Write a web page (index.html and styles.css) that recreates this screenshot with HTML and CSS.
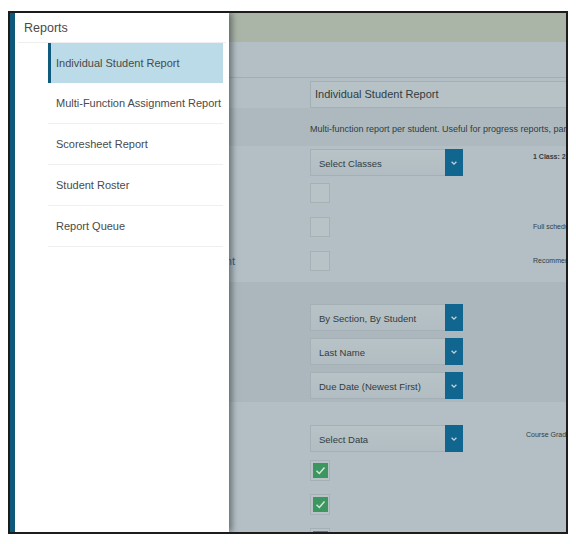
FILE: index.html
```html
<!DOCTYPE html>
<html>
<head>
<meta charset="utf-8">
<link rel="stylesheet" href="styles.css">
</head>
<body>
<div class="frame">
  <div class="strip"></div>
  <nav class="panel">
    <div class="panel-title">Reports</div>
    <ul class="menu">
      <li class="item active">Individual Student Report</li>
      <li class="item">Multi-Function Assignment Report</li>
      <li class="item">Scoresheet Report</li>
      <li class="item">Student Roster</li>
      <li class="item">Report Queue</li>
    </ul>
  </nav>
  <main class="backdrop">
    <div class="topband"></div>
    <div class="subhead"></div>
    <div class="report-row">
      <div class="input">Individual Student Report</div>
    </div>
    <div class="desc-row">
      <span class="desc">Multi-function report per student. Useful for progress reports, parent conferences and more.</span>
    </div>
    <section class="sec sec-a">
      <div class="row"><div class="lbl"></div><div class="select"><span>Select Classes</span><span class="btn"><svg viewBox="0 0 10 10" width="8" height="8"><path d="M2 3.5 L5 6.5 L8 3.5" fill="none" stroke="currentColor" stroke-width="1.6"/></svg></span></div><div class="note bold up">1 Class: 24 Students</div></div>
      <div class="row"><div class="lbl"></div><div class="cb"></div><div class="note"></div></div>
      <div class="row"><div class="lbl"></div><div class="cb"></div><div class="note">Full schedule for each student</div></div>
      <div class="row"><div class="lbl link">Show Assignment</div><div class="cb"></div><div class="note">Recommended for progress reports</div></div>
    </section>
    <section class="sec sec-b">
      <div class="row"><div class="lbl"></div><div class="select"><span>By Section, By Student</span><span class="btn"><svg viewBox="0 0 10 10" width="8" height="8"><path d="M2 3.5 L5 6.5 L8 3.5" fill="none" stroke="currentColor" stroke-width="1.6"/></svg></span></div><div class="note"></div></div>
      <div class="row"><div class="lbl"></div><div class="select"><span>Last Name</span><span class="btn"><svg viewBox="0 0 10 10" width="8" height="8"><path d="M2 3.5 L5 6.5 L8 3.5" fill="none" stroke="currentColor" stroke-width="1.6"/></svg></span></div><div class="note"></div></div>
      <div class="row"><div class="lbl"></div><div class="select"><span>Due Date (Newest First)</span><span class="btn"><svg viewBox="0 0 10 10" width="8" height="8"><path d="M2 3.5 L5 6.5 L8 3.5" fill="none" stroke="currentColor" stroke-width="1.6"/></svg></span></div><div class="note"></div></div>
    </section>
    <section class="sec sec-c">
      <div class="row"><div class="lbl"></div><div class="select"><span>Select Data</span><span class="btn"><svg viewBox="0 0 10 10" width="8" height="8"><path d="M2 3.5 L5 6.5 L8 3.5" fill="none" stroke="currentColor" stroke-width="1.6"/></svg></span></div><div class="note up shift">Course Grade</div></div>
      <div class="row"><div class="lbl"></div><div class="cb checked"><svg viewBox="0 0 15 15" width="15" height="15"><rect width="15" height="15" fill="#3c9660"/><path d="M3.5 7.8 L6.3 10.5 L11.5 4.5" fill="none" stroke="#d4e6da" stroke-width="1.5"/></svg></div><div class="note"></div></div>
      <div class="row"><div class="lbl"></div><div class="cb checked"><svg viewBox="0 0 15 15" width="15" height="15"><rect width="15" height="15" fill="#3c9660"/><path d="M3.5 7.8 L6.3 10.5 L11.5 4.5" fill="none" stroke="#d4e6da" stroke-width="1.5"/></svg></div><div class="note"></div></div>
      <div class="row"><div class="lbl"></div><div class="cb checked"><svg viewBox="0 0 15 15" width="15" height="15"><rect width="15" height="15" fill="#3c9660"/><path d="M3.5 7.8 L6.3 10.5 L11.5 4.5" fill="none" stroke="#d4e6da" stroke-width="1.5"/></svg></div><div class="note"></div></div>
    </section>
  </main>
</div>
</body>
</html>
```

FILE: styles.css
```css
html, body {
  margin: 0;
  padding: 0;
  background: #ffffff;
}
body {
  font-family: "Liberation Sans", Arial, sans-serif;
  color: #333;
}
.frame {
  margin: 11px 0 0 8px;
  width: 560px;
  height: 523px;
  box-sizing: border-box;
  border: 2px solid #1c1c1c;
  display: flex;
  overflow: hidden;
}
.strip {
  width: 5px;
  flex: none;
  background: #0f5a7d;
}
.panel {
  width: 214px;
  flex: none;
  background: #ffffff;
  position: relative;
  z-index: 2;
  box-shadow: 3px 0 6px rgba(40, 50, 55, 0.55);
  padding: 0 3px;
  box-sizing: border-box;
}
.panel-title {
  height: 29px;
  line-height: 31px;
  padding-left: 6px;
  font-size: 12.5px;
  color: #4a4a4a;
  border-bottom: 1px solid #eeeeee;
}
.menu {
  list-style: none;
  margin: 0 0 0 30px;
  padding: 0;
  width: 175px;
}
.item {
  height: 40px;
  line-height: 40px;
  padding-left: 8px;
  font-size: 11px;
  color: #4a4a4a;
  border-bottom: 1px solid #efefef;
  white-space: nowrap;
}
.item.active {
  background: #badbe7;
  border-left: 3px solid #0f5a7d;
  padding-left: 5px;
  border-bottom: none;
}
.backdrop {
  flex: 1;
  min-width: 0;
  background: #b3bfc4;
  position: relative;
  z-index: 1;
}
.topband {
  height: 29px;
  background: #aab5a7;
}
.subhead {
  height: 35px;
  border-bottom: 1px solid #a1adb2;
}
.report-row {
  height: 30px;
  padding: 3px 0 0 81px;
  box-sizing: border-box;
}
.input {
  height: 27px;
  box-sizing: border-box;
  border: 1px solid #a4b0b5;
  border-right: none;
  background: #b6c2c6;
  font-size: 11px;
  line-height: 25px;
  padding-left: 4px;
  color: #323c40;
  white-space: nowrap;
}
.desc-row {
  height: 38px;
  background: #adb9be;
  padding-left: 81px;
  box-sizing: border-box;
  display: flex;
  align-items: center;
  padding-top: 4px;
}
.desc {
  font-size: 9px;
  color: #323c40;
  white-space: nowrap;
}
.sec {
  box-sizing: border-box;
}
.sec-a {
  height: 136px;
  padding-top: 3px;
}
.sec-b {
  height: 120px;
  padding-top: 22px;
  background: #abb7bc;
}
.sec-c {
  padding-top: 23px;
}
.row {
  display: grid;
  grid-template-columns: 81px 223px 1fr;
  height: 34px;
}
.sec-c .row:first-child {
  height: 35px;
}
.lbl {
  display: flex;
  justify-content: flex-end;
  padding-right: 75px;
  white-space: nowrap;
  font-size: 11px;
  line-height: 20px;
}
.link {
  color: #1a5f8b;
}
.select {
  width: 153px;
  height: 27px;
  box-sizing: border-box;
  border: 1px solid #a4b0b5;
  background: linear-gradient(#b8c3c7, #b1bdc2);
  display: flex;
  align-items: center;
  justify-content: space-between;
  font-size: 9.5px;
  color: #323c40;
  padding-left: 8px;
}
.select > span:first-child {
  padding-top: 2px;
}
.btn {
  width: 18px;
  height: 27px;
  margin: -1px -1px -1px 0;
  background: #11668f;
  color: #c5d3da;
  display: flex;
  align-items: center;
  justify-content: center;
}
.cb {
  width: 20px;
  height: 20px;
  box-sizing: border-box;
  border: 1px solid #a5b1b5;
  background: #b8c3c7;
  display: flex;
  align-items: center;
  justify-content: center;
}
.cb.checked {
  width: 20px;
  height: 21px;
}
.note {
  font-size: 7px;
  color: #323c40;
  white-space: nowrap;
  line-height: 20px;
}
.note.bold {
  font-weight: bold;
}
.note.up {
  line-height: 16px;
}
.note.shift {
  margin-left: -7px;
  line-height: 20px;
}
```
